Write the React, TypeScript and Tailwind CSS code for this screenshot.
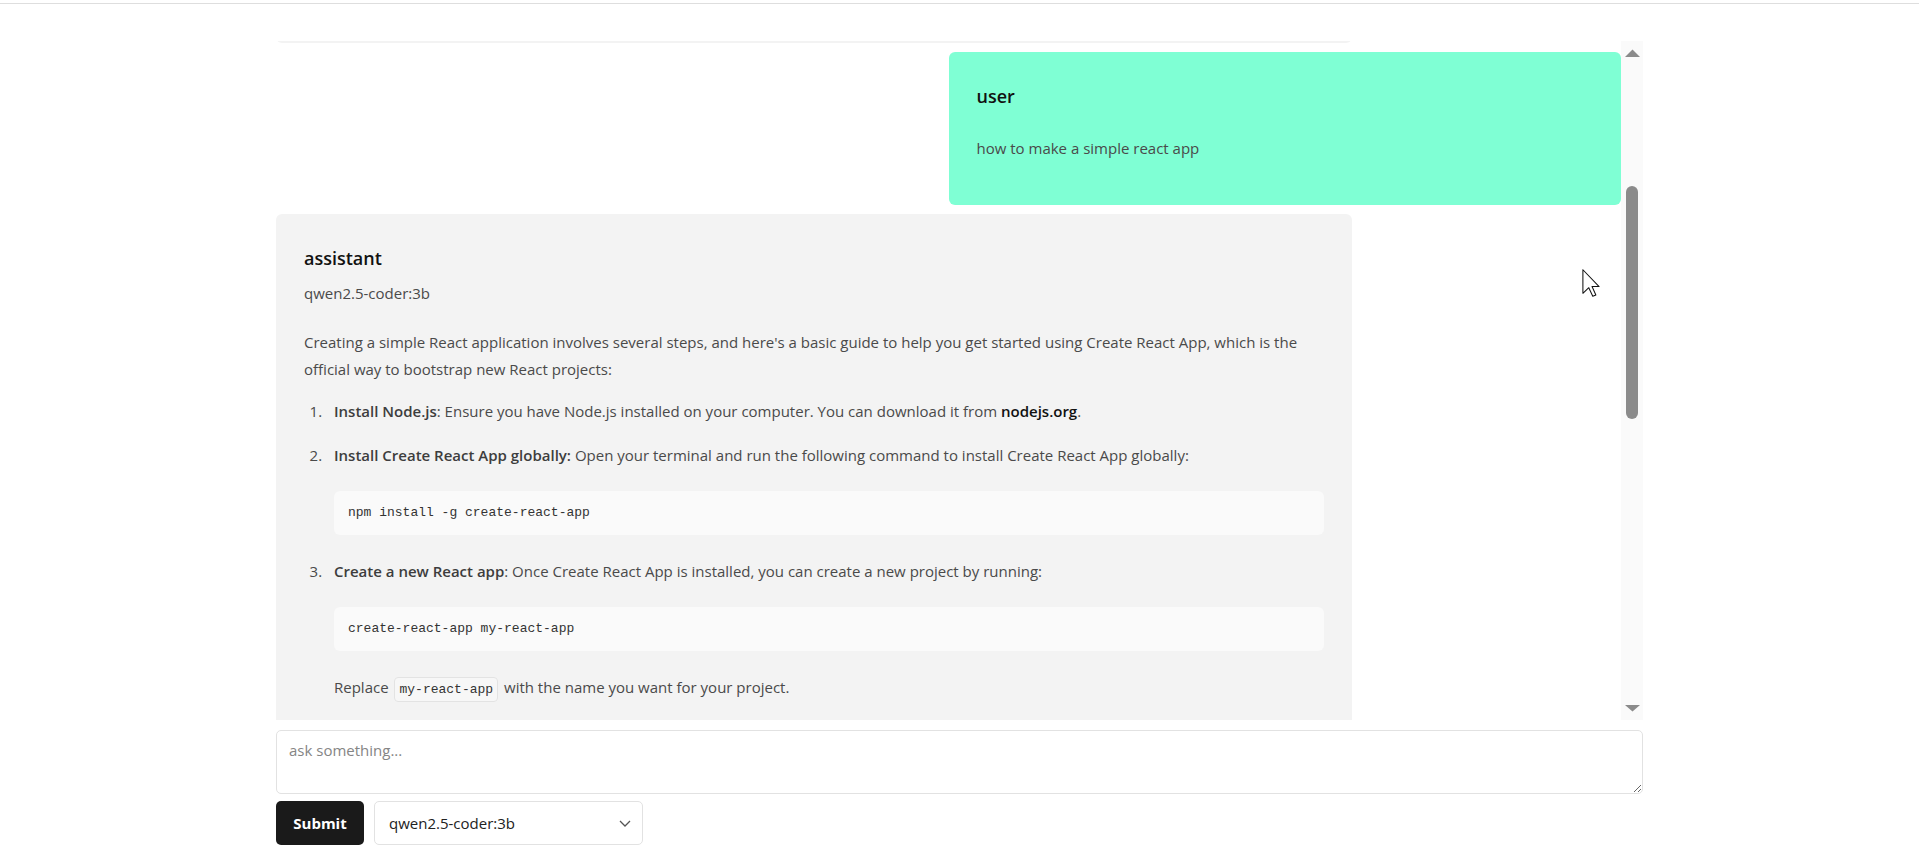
import { useLayoutEffect, useRef } from "react";

const codeCls =
  "mt-[22px] rounded-md bg-[#fafafa] px-[14px] py-3 font-['Liberation_Mono',monospace] text-[13px] leading-[20px] text-[#333] whitespace-pre";
const inlineCode =
  "mx-[2px] rounded-[4px] border border-[#e3e3e3] bg-[#f7f7f7] px-[4px] py-[4px] font-['Liberation_Mono',monospace] text-[13px] text-[#333]";
const bold = "font-semibold text-[#3d3d3d]";

const appJs = `import React from 'react';
import './App.css';

function App() {
  return (
    <div className="App">
      <header className="App-header">
        <h1>Hello, World!</h1>
        <p>Welcome to my simple React app.</p>
      </header>
    </div>
  );
}

export default App;`;

function UserMessage({ text, anchor }: { text: string; anchor?: React.Ref<HTMLDivElement> }) {
  return (
    <div ref={anchor} className="w-1/2 shrink-0 self-end rounded-md bg-[#7fffd4] p-7">
      <h3 className="text-[18px] font-semibold leading-[32px] text-[#111]">user</h3>
      <p className="mt-[23px] mb-[15px] leading-[27px]">{text}</p>
    </div>
  );
}

function AssistantMessage({ children }: { children: React.ReactNode }) {
  return (
    <div className="w-4/5 shrink-0 self-start rounded-md bg-[#f3f3f3] p-7">
      <h3 className="text-[18px] font-semibold leading-[32px] text-[#111]">assistant</h3>
      <div className="mt-[6px] leading-[27px]">qwen2.5-coder:3b</div>
      <div className="mt-[22px] mb-[15px] leading-[27px]">{children}</div>
    </div>
  );
}

function ScrollBar() {
  return (
    <div className="flex w-[22px] shrink-0 flex-col bg-[#fafafa]">
      <div className="flex h-[22px] items-start justify-center pt-[8px]">
        <svg width="15" height="8" viewBox="0 0 15 8">
          <path d="M0 8L7.5 0.5L15 8Z" fill="#8b8b8b" />
        </svg>
      </div>
      <div className="flex-1">
        <div className="ml-[5px] mt-[123px] h-[233px] w-[12px] rounded-full bg-[#8b8b8b]" />
      </div>
      <div className="flex h-[22px] items-end justify-center pb-[8px]">
        <svg width="15" height="7" viewBox="0 0 15 7">
          <path d="M0 0L7.5 6.5L15 0Z" fill="#8b8b8b" />
        </svg>
      </div>
    </div>
  );
}

export default function App() {
  const scrollRef = useRef<HTMLDivElement>(null);
  const anchorRef = useRef<HTMLDivElement>(null);

  useLayoutEffect(() => {
    if (scrollRef.current && anchorRef.current) {
      scrollRef.current.scrollTop = anchorRef.current.offsetTop - 11;
    }
  }, []);

  return (
    <main className="relative min-h-screen bg-white font-['Open_Sans',sans-serif] text-[15px] text-[#4a4a4a]">
      <div className="h-[4px] border-b border-[#dedede]" />

      <div className="mx-auto mt-[37px] w-[1367px]">
        {/* messages */}
        <div className="flex h-[679px]">
          <div
            ref={scrollRef}
            className="relative flex w-[1345px] flex-col gap-[9px] overflow-y-auto [scrollbar-width:none]"
          >
            <UserMessage text="hello" />
            <AssistantMessage>
              <p>Hello! How can I assist you today? Feel free to ask me anything about programming or React.</p>
            </AssistantMessage>

            <UserMessage text="how to make a simple react app" anchor={anchorRef} />

            <AssistantMessage>
              <p>
                Creating a simple React application involves several steps, and here's a basic guide to help you get
                started using Create React App, which is the official way to bootstrap new React projects:
              </p>
              <ol className="mt-[15px] list-decimal pl-[22px]">
                <li className="pl-[8px]">
                  <strong className={bold}>Install Node.js</strong>: Ensure you have Node.js installed on your
                  computer. You can download it from <a className="font-semibold text-[#111]">nodejs.org</a>.
                </li>
                <li className="mt-[17px] pl-[8px]">
                  <strong className={bold}>Install Create React App globally:</strong> Open your terminal and run the
                  following command to install Create React App globally:
                  <div className={codeCls}>npm install -g create-react-app</div>
                </li>
                <li className="mt-[23px] pl-[8px]">
                  <strong className={bold}>Create a new React app</strong>: Once Create React App is installed, you
                  can create a new project by running:
                  <div className={codeCls}>create-react-app my-react-app</div>
                  <p className="mt-[23px]">
                    Replace <code className={inlineCode}>my-react-app</code> with the name you want for your project.
                  </p>
                </li>
                <li className="mt-[23px] pl-[8px]">
                  <strong className={bold}>Navigate to your project directory</strong>: Change into the folder that
                  was just created:
                  <div className={codeCls}>cd my-react-app</div>
                </li>
                <li className="mt-[23px] pl-[8px]">
                  <strong className={bold}>Start the development server</strong>: Run the following command to start
                  the app:
                  <div className={codeCls}>npm start</div>
                  <p className="mt-[23px]">
                    This opens your new React app in the default web browser at{" "}
                    <code className={inlineCode}>http://localhost:3000</code>.
                  </p>
                </li>
                <li className="mt-[23px] pl-[8px]">
                  <strong className={bold}>Edit your app</strong>: Open <code className={inlineCode}>src/App.js</code>{" "}
                  in your code editor and change it, for example:
                  <div className={codeCls}>{appJs}</div>
                </li>
              </ol>
              <p className="mt-[23px]">
                Save the file and the browser reloads automatically to show your changes. That's it, you've created a
                simple React app!
              </p>
            </AssistantMessage>
          </div>
          <ScrollBar />
        </div>

        {/* input */}
        <form className="mt-[10px]" onSubmit={(e) => e.preventDefault()}>
          <textarea
            placeholder="ask something..."
            className="block h-[64px] w-full rounded-[5px] border border-[#e2e2e2] px-3 pt-2 text-[15px] leading-[22px] text-[#222] outline-none placeholder:text-[#858585]"
          />
          <div className="mt-[7px] flex gap-[10px]">
            <button
              type="submit"
              className="h-[44px] w-[88px] rounded-[5px] bg-[#1a1a1a] text-[15px] font-bold text-white"
            >
              Submit
            </button>
            <div className="relative">
              <select className="h-[44px] w-[269px] appearance-none rounded-[5px] border border-[#e2e2e2] bg-white pl-[14px] text-[15px] text-[#222] outline-none">
                <option>qwen2.5-coder:3b</option>
                <option>llama3.2:3b</option>
                <option>deepseek-r1:7b</option>
              </select>
              <svg
                className="pointer-events-none absolute right-[12px] top-[19px]"
                width="12"
                height="7"
                viewBox="0 0 12 7"
                fill="none"
              >
                <path d="M1 1l5 5 5-5" stroke="#555" strokeWidth="1.3" />
              </svg>
            </div>
          </div>
        </form>
      </div>

      {/* mouse pointer */}
      <svg
        className="pointer-events-none absolute left-[1582px] top-[269px]"
        width="18"
        height="28"
        viewBox="0 0 12 19"
      >
        <path
          d="M0.5 0.5V16.5L4.5 12.7L7.2 18.5L9.3 17.6L6.7 11.9H11.5Z"
          fill="#fff"
          stroke="#111"
          strokeWidth="0.7"
          strokeLinejoin="round"
        />
      </svg>
    </main>
  );
}
